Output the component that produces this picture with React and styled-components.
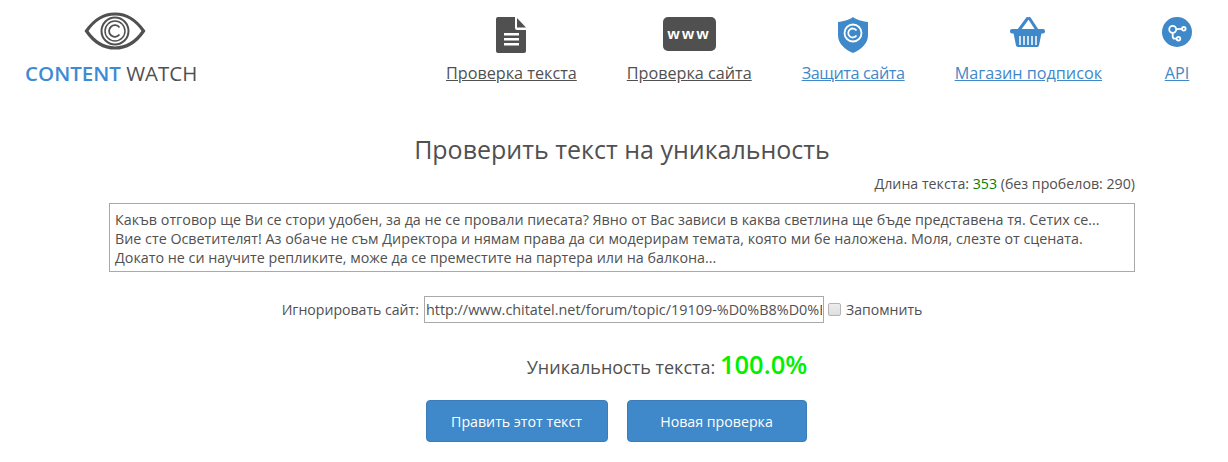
import React from "react";
import styled, { createGlobalStyle } from "styled-components";

const BLUE = "#3f88c9";
const DARK = "#505050";

const TEXT = `Какъв отговор ще Ви се стори удобен, за да не се провали пиесата? Явно от Вас зависи в каква светлина ще бъде представена тя. Сетих се...
Вие сте Осветителят! Аз обаче не съм Директора и нямам права да си модерирам темата, която ми бе наложена. Моля, слезте от сцената.
Докато не си научите репликите, може да се преместите на партера или на балкона...`;

const App = () => {
  return (
    <>
      <GlobalStyle />
      <Header>
        <Logo href="#">
          <svg width="62" height="40" viewBox="0 0 62 40">
            <path
              d="M2.500 20C10 9 20 3 31 3s21 6 28.500 17C52 31 42 37 31 37S10 31 2.500 20Z"
              fill="none"
              stroke={DARK}
              strokeWidth="3.200"
            />
            <circle cx="31" cy="20" r="13.500" fill="none" stroke={DARK} strokeWidth="2" />
            <circle cx="31" cy="20" r="10" fill="none" stroke={DARK} strokeWidth="1.500" />
            <path
              d="M35.500 16.500a5.800 5.800 0 1 0 0 7"
              fill="none"
              stroke={DARK}
              strokeWidth="1.800"
            />
          </svg>
          <LogoText>
            <b>CONTENT</b> WATCH
          </LogoText>
        </Logo>
        <Nav>
          <NavItem href="#">
            <IconSlot>
              <svg width="30" height="36" viewBox="0 0 30 36">
                <path
                  d="M2 0h17v11a2 2 0 0 0 2 2h9v21a2 2 0 0 1-2 2H2a2 2 0 0 1-2-2V2a2 2 0 0 1 2-2Z"
                  fill={DARK}
                />
                <path d="M21 1l9 9.500h-9Z" fill={DARK} />
                <path d="M8 16h15v2.500H8ZM8 21h15v2.500H8ZM8 26h15v2.500H8Z" fill="#fff" />
              </svg>
            </IconSlot>
            Проверка текста
          </NavItem>
          <NavItem href="#">
            <IconSlot>
              <WwwBadge>www</WwwBadge>
            </IconSlot>
            Проверка сайта
          </NavItem>
          <NavItem href="#" $accent $tight>
            <IconSlot>
              <svg width="30" height="36" viewBox="0 0 30 36">
                <path
                  d="M15 0c3 2.500 9 4.500 15 5v13c0 8-6 14-15 18C6 32 0 26 0 18V5c6-.5 12-2.500 15-5Z"
                  fill={BLUE}
                />
                <circle cx="15" cy="16" r="8.500" fill="none" stroke="#fff" strokeWidth="1.800" />
                <path
                  d="M18.500 13.500a4.500 4.500 0 1 0 0 5"
                  fill="none"
                  stroke="#fff"
                  strokeWidth="1.800"
                />
              </svg>
            </IconSlot>
            Защита сайта
          </NavItem>
          <NavItem href="#" $accent>
            <IconSlot>
              <svg width="36" height="30" viewBox="0 0 36 30">
                <path d="M9 13 17.500 1.500M27 13 19.500 1.500" stroke={BLUE} strokeWidth="3" strokeLinecap="round" />
                <rect x="0" y="12" width="35" height="4.500" rx="2" fill={BLUE} />
                <path d="M3.500 16h28L29 28.500a2 2 0 0 1-2 1.500H8a2 2 0 0 1-2-1.500Z" fill={BLUE} />
                <path
                  d="M10 19v9M14 19v9M18 19v9M22 19v9M26 19v9"
                  stroke="#fff"
                  strokeWidth="1.500"
                />
              </svg>
            </IconSlot>
            Магазин подписок
          </NavItem>
          <NavItem href="#" $accent $wide>
            <IconSlot>
              <svg width="30" height="30" viewBox="0 0 30 30">
                <circle cx="15" cy="15" r="15" fill={BLUE} />
                <g fill="none" stroke="#fff" strokeWidth="1.800">
                  <circle cx="10.700" cy="12.300" r="3.500" />
                  <circle cx="21.800" cy="11.800" r="1.800" />
                  <circle cx="16.500" cy="21.700" r="1.800" />
                  <path d="M14.200 12.200 20 11.900M10.700 15.800V19.500a2.200 2.200 0 0 0 2.200 2.200h1.800" />
                </g>
              </svg>
            </IconSlot>
            API
          </NavItem>
        </Nav>
      </Header>

      <Main>
        <Title>Проверить текст на уникальность</Title>
        <LengthInfo>
          Длина текста: <Count>353</Count> (без пробелов: 290)
        </LengthInfo>
        <TextBox readOnly rows={3} wrap="off" defaultValue={TEXT} />
        <IgnoreRow>
          <span>Игнорировать сайт:</span>
          <UrlInput
            readOnly
            defaultValue="http://www.chitatel.net/forum/topic/19109-%D0%B8%D0%BE%D0%B1%D0%B0"
          />
          <RememberLabel>
            <input type="checkbox" />
            Запомнить
          </RememberLabel>
        </IgnoreRow>
        <Result>
          Уникальность текста: <Percent>100.0%</Percent>
        </Result>
        <Actions>
          <ActionButton $width={182}>Править этот текст</ActionButton>
          <ActionButton $width={180}>Новая проверка</ActionButton>
        </Actions>
      </Main>
    </>
  );
};

const GlobalStyle = createGlobalStyle`
  html, body {
    margin: 0;
    background: #fff;
    color: #505050;
    font-family: "Open Sans", sans-serif;
  }
`;

const Header = styled.header`
  display: flex;
  justify-content: space-between;
  padding: 11px 26px 0;
  height: 94px;
  box-sizing: border-box;
`;

const Logo = styled.a`
  display: flex;
  flex-direction: column;
  align-items: center;
  align-self: flex-start;
  text-decoration: none;

  svg {
    display: block;
    margin-left: 6px;
  }
`;

const LogoText = styled.span`
  margin-top: 9px;
  margin-left: -1px;
  font-size: 20.500px;
  line-height: 26px;
  color: #505050;
  white-space: nowrap;

  b {
    font-weight: 600;
    color: #3d8bd4;
  }
`;

const Nav = styled.nav`
  display: flex;
  gap: 50px;
`;

const NavItem = styled.a`
  display: flex;
  flex-direction: column;
  align-items: center;
  min-width: ${(p) => (p.$wide ? "50px" : "0")};
  font-size: 16.200px;
  line-height: 22px;
  letter-spacing: ${(p) => (p.$tight ? "-0.4px" : "0")};
  white-space: nowrap;
  color: ${(p) => (p.$accent ? "#3f88c9" : "#505050")};
`;

const IconSlot = styled.span`
  display: flex;
  align-items: flex-start;
  justify-content: center;
  height: 36px;
  margin: 6px 0 9px;

  svg {
    display: block;
  }
`;

const WwwBadge = styled.span`
  display: flex;
  align-items: center;
  justify-content: center;
  width: 53px;
  height: 34px;
  border-radius: 5px;
  background: #505050;
  color: #fff;
  font-family: "Liberation Sans", sans-serif;
  font-size: 15.500px;
  font-weight: 700;
  letter-spacing: 2.500px;
`;

const Main = styled.main`
  display: flex;
  flex-direction: column;
  width: 1026px;
  margin-left: 109px;
`;

const Title = styled.h1`
  margin: 38px 0 0;
  font-size: 25px;
  font-weight: 400;
  line-height: 34px;
  text-align: center;
  color: #505050;
`;

const LengthInfo = styled.div`
  margin-top: 9px;
  font-size: 14.200px;
  line-height: 18px;
  text-align: right;
`;

const Count = styled.span`
  color: #008000;
`;

const TextBox = styled.textarea`
  display: block;
  box-sizing: border-box;
  width: 100%;
  height: 69px;
  margin-top: 10px;
  padding: 6px 5px;
  border: 1px solid #a9a9a9;
  border-radius: 0;
  outline: none;
  resize: none;
  overflow: hidden;
  color: #505050;
  font-family: "Open Sans", sans-serif;
  font-size: 14.300px;
  line-height: 19px;
`;

const IgnoreRow = styled.div`
  display: flex;
  align-items: center;
  justify-content: center;
  gap: 5px;
  margin-top: 24px;
  padding-right: 40px;
  font-size: 14.100px;
`;

const UrlInput = styled.input`
  box-sizing: border-box;
  width: 400px;
  height: 27px;
  padding: 1px;
  border: 1px solid #a9a9a9;
  border-radius: 0;
  outline: none;
  color: #505050;
  font-family: "Open Sans", sans-serif;
  font-size: 14.400px;
`;

const RememberLabel = styled.label`
  display: flex;
  align-items: center;
  gap: 5px;

  input {
    appearance: none;
    box-sizing: border-box;
    width: 13px;
    height: 13px;
    margin: 0 0 0 -1px;
    border: 1px solid #b4b4b4;
    border-radius: 2px;
    background: linear-gradient(#ededed, #dedede);
  }
`;

const Result = styled.div`
  margin-top: 24px;
  padding-left: 90px;
  font-size: 18px;
  line-height: 34px;
  text-align: center;
`;

const Percent = styled.b`
  font-size: 25.500px;
  font-weight: 600;
  color: #00f000;
`;

const Actions = styled.div`
  display: flex;
  justify-content: center;
  gap: 19px;
  margin-top: 16px;
  padding-right: 12px;
`;

const ActionButton = styled.button`
  box-sizing: border-box;
  width: ${(p) => p.$width}px;
  height: 42px;
  border: 1px solid #3a7dba;
  border-radius: 4px;
  background: #3f88c9;
  color: #fff;
  font-family: "Open Sans", sans-serif;
  font-size: 14.200px;
`;

export default App;
